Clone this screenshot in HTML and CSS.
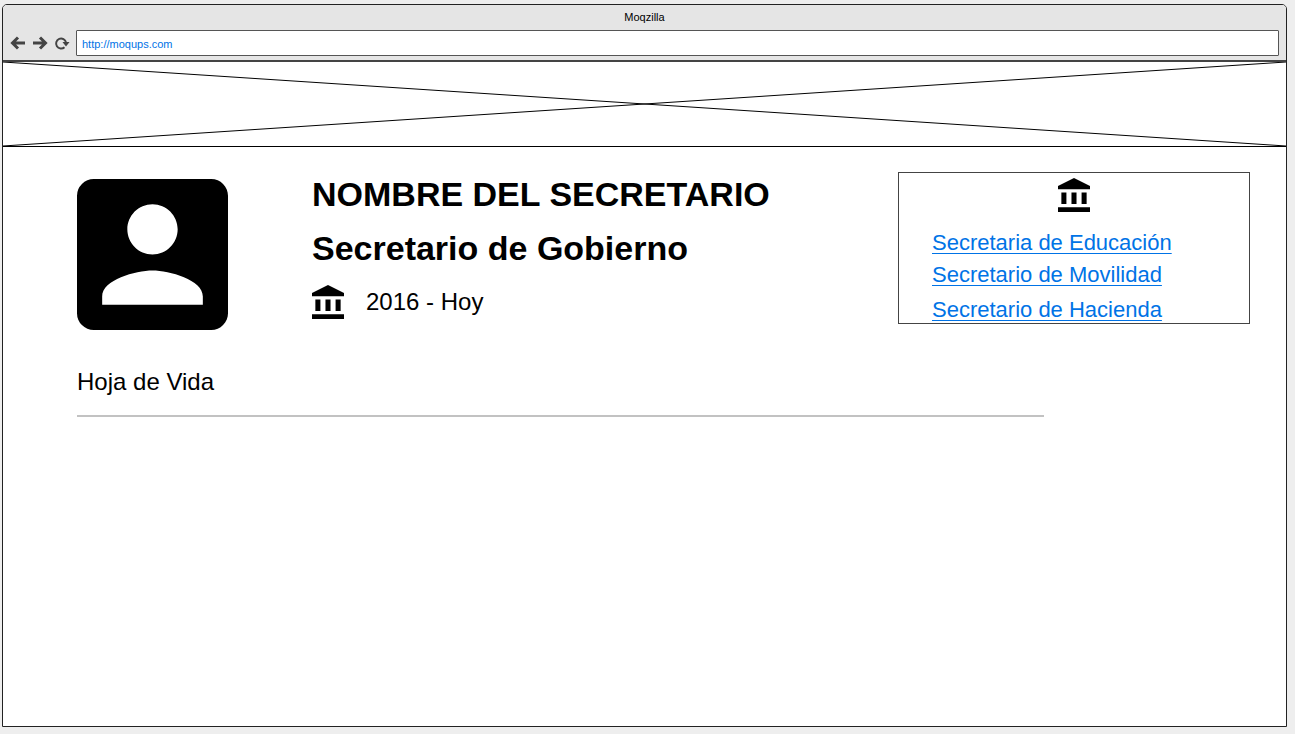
FILE: index.html
```html
<!DOCTYPE html>
<html lang="es">
<head>
<meta charset="utf-8">
<meta name="viewport" content="width=device-width, initial-scale=1">
<title>Moqzilla</title>
<link rel="stylesheet" href="styles.css">
</head>
<body>
<svg class="symbols" aria-hidden="true">
  <symbol id="bank" viewBox="2 1 19 21" preserveAspectRatio="none">
    <path d="M4 10v7h3v-7H4zm6 0v7h3v-7h-3zM2 22h19v-3H2v3zm14-12v7h3v-7h-3zM11.500 1L2 6v2h19V6l-9.500-5z"/>
  </symbol>
</svg>
<div class="window">
  <header class="chrome">
    <div class="title">Moqzilla</div>
    <div class="toolbar">
      <button class="nav-button" type="button" aria-label="Atrás">
        <svg class="nav-icon" viewBox="0 0 16 14"><path class="arrow" d="M15 7H2.500M8 1.500L2.500 7 8 12.500"/></svg>
      </button>
      <button class="nav-button" type="button" aria-label="Adelante">
        <svg class="nav-icon" viewBox="0 0 16 14"><path class="arrow" d="M1 7h12.500M8 1.500L13.500 7 8 12.500"/></svg>
      </button>
      <button class="nav-button" type="button" aria-label="Recargar">
        <svg class="nav-icon" viewBox="0 0 16 14"><path class="reload" d="M10.500 11.200A5 5 0 1 1 12 6.500"/><path class="reload-tip" d="M8.500 6h7L12 10.500z"/></svg>
      </button>
      <input class="address" type="text" value="http://moqups.com" aria-label="Dirección" spellcheck="false">
    </div>
  </header>
  <svg class="banner" viewBox="0 0 100 100" preserveAspectRatio="none" role="img" aria-label="Imagen">
    <path d="M0 0L100 100M0 100L100 0"/>
  </svg>
  <main class="content">
    <section class="profile">
      <svg class="avatar" viewBox="3 3 18 18" role="img" aria-label="Foto"><path d="M3 5v14a2 2 0 0 0 2 2h14c1.100 0 2-.9 2-2V5c0-1.100-.9-2-2-2H5a2 2 0 0 0-2 2zm12 4c0 1.660-1.340 3-3 3s-3-1.340-3-3 1.340-3 3-3 3 1.340 3 3zm-9 8c0-2 4-3.100 6-3.100s6 1.100 6 3.100v1H6v-1z"/></svg>
      <div class="details">
        <h1 class="heading">NOMBRE DEL SECRETARIO</h1>
        <h2 class="heading">Secretario de Gobierno</h2>
        <div class="period">
          <svg class="bank"><use href="#bank"/></svg>
          <span>2016 - Hoy</span>
        </div>
      </div>
    </section>
    <nav class="related" aria-label="Secretarías">
      <svg class="bank"><use href="#bank"/></svg>
      <ul class="links">
        <li><a href="#educacion">Secretaria de Educación</a></li>
        <li><a href="#movilidad">Secretario de Movilidad</a></li>
        <li><a href="#hacienda">Secretario de Hacienda</a></li>
      </ul>
    </nav>
  </main>
  <section class="resume">
    <h3 class="resume-title">Hoja de Vida</h3>
  </section>
</div>
</body>
</html>
```
FILE: styles.css
```css
* {
  box-sizing: border-box;
}

body {
  margin: 0;
  min-height: 100vh;
  display: flex;
  padding: 4px 8px 7px 2px;
  background: #eee;
  color: #000;
  font-family: "Liberation Sans", Arial, sans-serif;
  font-size: 24px;
}

.symbols {
  position: absolute;
  width: 0;
  height: 0;
}

.window {
  flex: 1;
  display: flex;
  flex-direction: column;
  border: 1px solid #222;
  border-radius: 5px 5px 0 0;
  background: #fff;
  overflow: hidden;
}

.chrome {
  padding: 4px 7px;
  border-bottom: 1px solid #444;
  background: #e5e5e5;
}

.title {
  font-size: 11px;
  line-height: 16px;
  text-align: center;
}

.toolbar {
  display: flex;
  align-items: center;
  gap: 6px;
  margin-top: 5px;
}

.nav-button {
  display: flex;
  padding: 0;
  border: 0;
  background: none;
}

.nav-icon {
  width: 16px;
  height: 14px;
  fill: none;
  stroke: #444;
}

.arrow {
  stroke-width: 3;
}

.reload {
  stroke-width: 2;
}

.reload-tip {
  fill: #444;
  stroke: none;
}

.address {
  flex: 1;
  min-width: 0;
  height: 26px;
  padding: 2px 5px 0;
  border: 1px solid #555;
  border-radius: 1px;
  background: #fff;
  color: #0073e6;
  font: 11px "Liberation Sans", Arial, sans-serif;
}

.banner {
  display: block;
  width: 100%;
  height: 86px;
  border-top: 1px solid #444;
  border-bottom: 1px solid #000;
  stroke: #000;
  fill: none;
}

.banner path {
  stroke-width: 1px;
  vector-effect: non-scaling-stroke;
}

.content {
  display: flex;
  justify-content: space-between;
  align-items: flex-start;
  padding: 25px 36px 0 74px;
}

.profile {
  display: flex;
  gap: 84px;
}

.avatar {
  width: 151px;
  height: 151px;
  margin-top: 7px;
}

.heading {
  margin: 0;
  font-size: 34px;
  line-height: 54px;
}

.details {
  margin-top: -5px;
}

.period {
  display: flex;
  align-items: center;
  gap: 22px;
  margin-top: 10px;
}

.bank {
  display: block;
  width: 32px;
  height: 34px;
}

.related {
  width: 352px;
  padding: 5px 33px 0;
  border: 1px solid #444;
}

.related .bank {
  margin: 0 auto;
}

.links {
  margin: 15px 0 0;
  padding: 0;
  list-style: none;
  font-size: 22px;
  line-height: 32px;
}

.links li:last-child {
  height: 29px;
  margin-top: 3px;
}

.links a {
  color: #0073e6;
  text-decoration: underline 1px;
  text-underline-offset: 3px;
  text-decoration-skip-ink: none;
}

.resume {
  padding: 36px 74px 0;
}

.resume-title {
  max-width: 967px;
  margin: 0;
  padding-bottom: 17px;
  border-bottom: 2px solid #c2c2c2;
  font-size: 24px;
  font-weight: 400;
  line-height: 32px;
}
```
